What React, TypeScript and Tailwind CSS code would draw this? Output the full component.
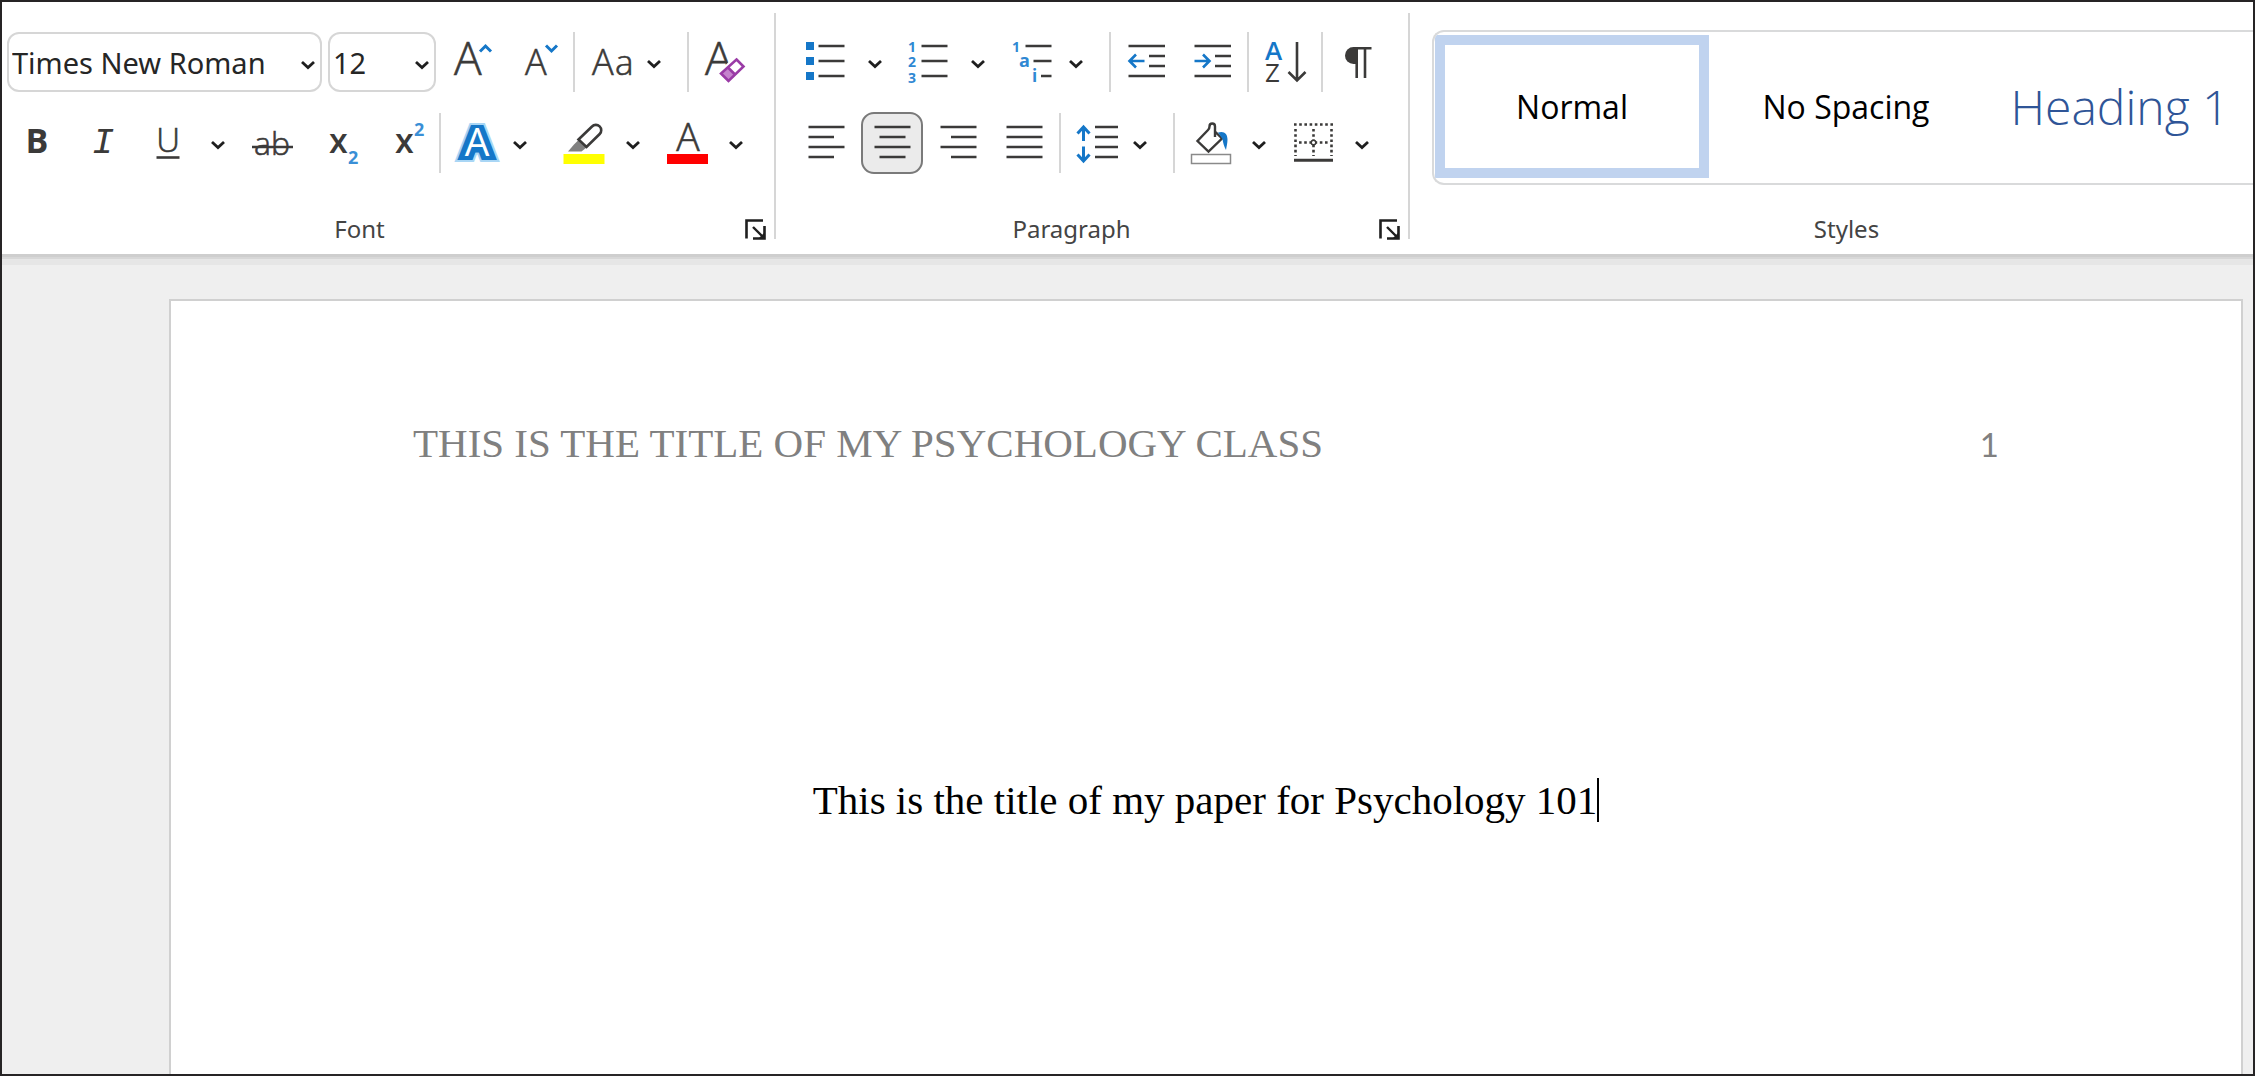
import type { ReactNode } from "react";

const INK = "#3b3a39";
const BLUE = "#1577c8";

function Chevron({ className = "" }: { className?: string }) {
  return (
    <svg width="14" height="14" viewBox="0 0 14 14" fill="none" className={className} aria-hidden="true">
      <path d="M1 6l6 5.500L13 6" stroke="#1f1f1f" strokeWidth="2.8" />
    </svg>
  );
}

function Icon({ width = 60, children }: { width?: number; children: ReactNode }) {
  return (
    <svg
      width={width}
      height="60"
      viewBox={`0 0 ${width} 60`}
      fill="none"
      stroke={INK}
      strokeWidth="2.6"
      aria-hidden="true"
      className="block shrink-0 overflow-visible"
    >
      {children}
    </svg>
  );
}

function Glyph({
  x,
  y,
  size,
  weight = 300,
  fill = INK,
  middle = false,
  children,
}: {
  x: number;
  y: number;
  size: number;
  weight?: number;
  fill?: string;
  middle?: boolean;
  children: string;
}) {
  return (
    <text
      x={x}
      y={y}
      fontSize={size}
      fontWeight={weight}
      fill={fill}
      stroke={weight === 300 ? fill : "none"}
      strokeWidth="0.6"
      textAnchor={middle ? "middle" : "start"}
      fontFamily='"Open Sans", "Noto Sans", sans-serif'
    >
      {children}
    </text>
  );
}

function Tool({ label, active = false, children }: { label: string; active?: boolean; children: ReactNode }) {
  return (
    <button
      type="button"
      aria-label={label}
      aria-pressed={active}
      className={
        active
          ? "flex size-15 shrink-0 items-center justify-center rounded-xl bg-[#ebebeb] outline-2 -outline-offset-1 outline-[#7a7a7a]"
          : "flex size-15 shrink-0 items-center justify-center rounded-xl hover:bg-gray-100"
      }
    >
      {children}
    </button>
  );
}

function SplitTool({ label, children }: { label: string; children: ReactNode }) {
  return (
    <div className="flex w-[97px] shrink-0">
      <Tool label={label}>{children}</Tool>
      <button type="button" aria-label={`${label} options`} className="flex flex-1 items-center justify-center">
        <Chevron />
      </button>
    </div>
  );
}

function MenuTool({ label, children }: { label: string; children: ReactNode }) {
  return (
    <button type="button" aria-label={label} className="flex h-15 w-[102px] shrink-0 items-center gap-[15px] pl-2.5">
      {children}
      <Chevron />
    </button>
  );
}

function Separator() {
  return <div className="-mx-px h-15 w-0.5 shrink-0 bg-[#d6d6d6]" />;
}

function Row({ children }: { children: ReactNode }) {
  return <div className="flex h-15 items-center gap-1.5">{children}</div>;
}

function Launcher({ label }: { label: string }) {
  return (
    <button type="button" aria-label={label} className="shrink-0">
      <svg width="21" height="21" viewBox="0 0 21 21" fill="none" stroke="#1f1f1f" strokeWidth="2.6" aria-hidden="true">
        <path d="M1.500 19.500V1.500H18" />
        <path d="M8 8l11 11" strokeWidth="2.4" />
        <path d="M19.500 7V19.500H8" />
        <path d="M20 13v7h-7z" fill="#1f1f1f" stroke="none" />
      </svg>
    </button>
  );
}

function RibbonGroup({
  title,
  rowsClass,
  labelClass,
  children,
}: {
  title: string;
  rowsClass: string;
  labelClass: string;
  children: ReactNode;
}) {
  return (
    <section aria-label={title} className="flex shrink-0 flex-col">
      <div className={rowsClass}>{children}</div>
      <div className="mt-10 flex items-center pr-2">
        <span className={labelClass}>{title}</span>
        <Launcher label={`${title} settings`} />
      </div>
    </section>
  );
}

function GroupDivider() {
  return <div className="mb-1.5 w-0.5 shrink-0 bg-[#d6d6d6]" />;
}

function Picker({ label, value, options, className }: { label: string; value: string; options: string[]; className: string }) {
  return (
    <label className={className}>
      <select
        aria-label={label}
        defaultValue={value}
        className="h-full w-full appearance-none rounded-xl border-2 border-[#d6d6d6] bg-white pt-0.5 pl-[3px] text-[29px] text-[#262626]"
      >
        {options.map((o) => (
          <option key={o}>{o}</option>
        ))}
      </select>
      <Chevron className="pointer-events-none absolute top-6 right-[7px]" />
    </label>
  );
}

function FontGroup() {
  return (
    <RibbonGroup
      title="Font"
      rowsClass="flex flex-col gap-[21px] pt-[19px] pr-5 pl-[5px]"
      labelClass="flex-1 pr-7 text-center text-2xl leading-8"
    >
      <Row>
        <Picker
          label="Font name"
          value="Times New Roman"
          options={["Times New Roman", "Arial", "Calibri"]}
          className="relative h-15 w-[315px] shrink-0"
        />
        <Picker label="Font size" value="12" options={["11", "12", "14"]} className="relative h-15 w-[108px] shrink-0" />
        <Tool label="Increase font size">
          <Icon>
            <Glyph x={12} y={43} size={46}>A</Glyph>
            <path d="M38 19.500l5.500-5.500 5.500 5.500" stroke={BLUE} strokeWidth="3" />
          </Icon>
        </Tool>
        <Tool label="Decrease font size">
          <Icon>
            <Glyph x={17} y={43} size={36}>A</Glyph>
            <path d="M38 13.500l5.500 5.500 5.500-5.500" stroke={BLUE} strokeWidth="3" />
          </Icon>
        </Tool>
        <Separator />
        <MenuTool label="Change case">
          <Icon width={42}>
            <Glyph x={2} y={43} size={36}>A</Glyph>
            <Glyph x={25} y={43} size={35}>a</Glyph>
          </Icon>
        </MenuTool>
        <Separator />
        <Tool label="Clear formatting">
          <Icon>
            <Glyph x={11} y={43} size={46}>A</Glyph>
            <path d="M42 23L54 34 34 54 21 43z" fill="#fff" stroke="none" />
            <path d="M33.500 35l7.500 7.500-7 7-7.500-7.500z" fill="#c583cd" stroke="none" />
            <path d="M42.500 27.500l7 7-15 14.500-7.500-7.500z" stroke="#9a3ba6" />
            <path d="M33.500 35l7.500 7.500" stroke="#9a3ba6" />
          </Icon>
        </Tool>
      </Row>
      <Row>
        <Tool label="Bold">
          <Icon>
            <Glyph x={30} y={40} size={34} weight={700} middle>B</Glyph>
          </Icon>
        </Tool>
        <Tool label="Italic">
          <Icon>
            <text x="30" y="40" fontSize="37" fontStyle="italic" textAnchor="middle" fill={INK} stroke="none" fontFamily='"Liberation Mono", monospace'>
              I
            </text>
          </Icon>
        </Tool>
        <SplitTool label="Underline">
          <Icon>
            <Glyph x={29} y={39} size={33} middle>U</Glyph>
            <path d="M17.500 44.500h23" />
          </Icon>
        </SplitTool>
        <Tool label="Strikethrough">
          <Icon>
            <Glyph x={30} y={42} size={32} middle>ab</Glyph>
            <path d="M10 34h41" />
          </Icon>
        </Tool>
        <Tool label="Subscript">
          <Icon>
            <Glyph x={21} y={40} size={34} weight={600}>x</Glyph>
            <Glyph x={40} y={51} size={18} weight={700} fill="#3a8fd6">2</Glyph>
          </Icon>
        </Tool>
        <Tool label="Superscript">
          <Icon>
            <Glyph x={21} y={40} size={34} weight={600}>x</Glyph>
            <Glyph x={40} y={23} size={18} weight={700} fill="#3a8fd6">2</Glyph>
          </Icon>
        </Tool>
        <Separator />
        <MenuTool label="Text effects">
          <Icon width={42}>
            <clipPath id="effects-halo">
              <path d="M-4 10h50v39H-4z" />
            </clipPath>
            <clipPath id="effects-body">
              <path d="M-4 12h50v35H-4z" />
            </clipPath>
            <g fontFamily='"Open Sans", sans-serif' fontSize="39" fontWeight="500" textAnchor="middle">
              <text x="21" y="43" stroke="#a9d6f5" strokeWidth="15" clipPath="url(#effects-halo)">A</text>
              <text x="21" y="43" stroke={BLUE} strokeWidth="11" fill={BLUE} clipPath="url(#effects-body)">A</text>
              <text x="21" y="43" stroke="none" fill="#fff">A</text>
            </g>
          </Icon>
        </MenuTool>
        <SplitTool label="Text highlight color">
          <Icon>
            <path d="M14 38.500l6-7 4.500-4.500 8 7.500-5 4z" fill="#808080" stroke="none" />
            <path d="M24.500 26.500L38 13.500a5.300 5.300 0 0 1 7.700 7.500L32.500 34z" />
            <path d="M9.500 41h41v10h-41z" fill="#ffff00" stroke="none" />
          </Icon>
        </SplitTool>
        <SplitTool label="Font color">
          <Icon>
            <Glyph x={31} y={38} size={39} middle>A</Glyph>
            <path d="M10 41h41v10H10z" fill="#ff0000" stroke="none" />
          </Icon>
        </SplitTool>
      </Row>
    </RibbonGroup>
  );
}

function ParagraphGroup() {
  return (
    <RibbonGroup
      title="Paragraph"
      rowsClass="flex flex-col gap-[21px] px-5 pt-[19px]"
      labelClass="flex-1 pr-3 text-center text-2xl leading-8"
    >
      <Row>
        <SplitTool label="Bullets">
          <Icon>
            <path d="M10 10h8v8h-8zM10 25h8v8h-8zM10 40h8v8h-8z" fill={BLUE} stroke="none" />
            <path d="M22.500 14h26M22.500 29h26M22.500 44h26" />
          </Icon>
        </SplitTool>
        <SplitTool label="Numbering">
          <Icon>
            <Glyph x={9} y={20} size={14} weight={700} fill="#2f88d3">1</Glyph>
            <Glyph x={9} y={35} size={14} weight={700} fill="#2f88d3">2</Glyph>
            <Glyph x={9} y={51} size={14} weight={700} fill="#2f88d3">3</Glyph>
            <path d="M22.500 14h26M22.500 29h26M22.500 44h26" />
          </Icon>
        </SplitTool>
        <MenuTool label="Multilevel list">
          <Icon width={42}>
            <Glyph x={0} y={20} size={14} weight={700} fill="#2f88d3">1</Glyph>
            <Glyph x={7} y={35} size={18} weight={700} fill="#2f88d3">a</Glyph>
            <Glyph x={20} y={50} size={17} weight={700} fill="#2f88d3">i</Glyph>
            <path d="M13.500 14h26M21.500 29h18M29 44h10.500" />
          </Icon>
        </MenuTool>
        <Separator />
        <Tool label="Decrease indent">
          <Icon>
            <path d="M12.500 14h36.500M33 24h16M33 34h16M12.500 44h36.500" />
            <path d="M28.500 29h-14M20 22.500L13.500 29l6.500 6.500" stroke={BLUE} />
          </Icon>
        </Tool>
        <Tool label="Increase indent">
          <Icon>
            <path d="M12.500 14h36.500M33 24h16M33 34h16M12.500 44h36.500" />
            <path d="M12.500 29h14M21 22.500l6.500 6.500-6.500 6.500" stroke={BLUE} />
          </Icon>
        </Tool>
        <Separator />
        <button type="button" aria-label="Sort" className="flex h-15 w-[62px] shrink-0 items-center justify-center">
          <Icon width={62}>
            <Glyph x={11} y={28} size={26} weight={600} fill={BLUE}>A</Glyph>
            <Glyph x={11} y={50} size={26} weight={500}>Z</Glyph>
            <path d="M43 10v38M34.500 40l8.500 8.500 8.500-8.500" />
          </Icon>
        </button>
        <Separator />
        <Tool label="Show formatting marks">
          <Icon>
            <path d="M29 15h-3.500a8.500 8.500 0 0 0 0 17H29z" fill={INK} stroke="none" />
            <path d="M26 16.300h17.500M28.700 15v31M37 15v31" />
          </Icon>
        </Tool>
      </Row>
      <Row>
        <Tool label="Align left">
          <Icon>
            <path d="M12.500 14h36M12.500 24h25.500M12.500 34h36M12.500 44h25.500" />
          </Icon>
        </Tool>
        <Tool label="Center" active>
          <Icon>
            <path d="M12.500 14h36M17.500 24h26M12.500 34h36M17.500 44h26" />
          </Icon>
        </Tool>
        <Tool label="Align right">
          <Icon>
            <path d="M12.500 14h36M23 24h25.500M12.500 34h36M23 44h25.500" />
          </Icon>
        </Tool>
        <Tool label="Justify">
          <Icon>
            <path d="M12.500 14h36M12.500 24h36M12.500 34h36M12.500 44h36" />
          </Icon>
        </Tool>
        <Separator />
        <MenuTool label="Line spacing">
          <Icon width={42}>
            <path d="M7.500 28V14.500M1.500 20.500l6-6.500 6 6.500M7.500 33.500V47M1.500 41.500l6 6.500 6-6.500" stroke={BLUE} strokeWidth="3" />
            <path d="M19 14h23M19 24h23M19 34h23M19 44h23" />
          </Icon>
        </MenuTool>
        <Separator />
        <SplitTool label="Shading">
          <Icon>
            <path d="M35 24V13.500c0-4-5.500-4-5.500 0 0 1.500-.5 2.500-1.500 3.500L17.500 28l11 10.500L42 25.500l-7-7" strokeWidth="2.400" />
            <path d="M38 19.500c6-2 9.500 1 9.500 7 0 4-1 7-1.500 10.500-2-4-3-7-3.500-11z" fill={BLUE} stroke="none" />
            <path d="M11.500 41.500h39v9h-39z" fill="#fff" stroke="#8a8a8a" strokeWidth="1.500" />
          </Icon>
        </SplitTool>
        <SplitTool label="Borders">
          <Icon>
            <path d="M11 11.500h39M16 29.500h30M12.500 16v27M30.500 16v27M48.500 16v27" strokeDasharray="2.600 2.600" />
            <circle cx="30.500" cy="29.500" r="2.300" fill="#fff" strokeWidth="1.500" />
            <path d="M11 47.300h39" strokeWidth="3" />
          </Icon>
        </SplitTool>
      </Row>
    </RibbonGroup>
  );
}

function StylesGroup() {
  return (
    <section aria-label="Styles" className="flex min-w-0 flex-1 flex-col pt-[17px] pl-[22px]">
      <div className="flex h-[155px] overflow-hidden rounded-l-xl border-2 border-r-0 border-[#d9dadb] pt-[3px] pb-[5px] pl-px font-['Open_Sans',sans-serif] text-[32px] font-medium text-black">
        <button type="button" aria-pressed="true" className="w-[274px] shrink-0 border-10 border-[#c0d3ef]">
          Normal
        </button>
        <button type="button" className="w-[274px] shrink-0">
          No Spacing
        </button>
        <button type="button" className="w-[274px] shrink-0 text-5xl font-light whitespace-nowrap text-[#2f5597]">
          Heading 1
        </button>
      </div>
      <span className="mt-7 pl-2 text-center text-2xl leading-8">Styles</span>
    </section>
  );
}

export default function App() {
  return (
    <div className="flex min-h-screen flex-col overflow-hidden border-2 border-[#262425] bg-[#efefef] font-['Noto_Sans',sans-serif] text-[#444444]">
      <header className="relative flex border-b-[3px] border-[#cecece] bg-white pt-[11px] pb-[9px] shadow-[0_2px_0_#d7d7d7,0_8px_0_#e6e6e6]">
        <FontGroup />
        <GroupDivider />
        <ParagraphGroup />
        <GroupDivider />
        <StylesGroup />
      </header>
      <main className="mt-[42px] mr-2.5 ml-[167px] flex flex-1 flex-col border-2 border-b-0 border-[#d0d0d0] bg-white px-[242px] pt-[118px] font-['Liberation_Serif',serif] text-[41px] leading-12">
        <div className="flex items-baseline justify-between text-[#808080]">
          <span>THIS IS THE TITLE OF MY PSYCHOLOGY CLASS</span>
          <span className="font-['Lato',sans-serif] text-[33px]">1</span>
        </div>
        <div className="mt-[308px] flex items-center justify-center text-black">
          <h1>This is the title of my paper for Psychology 101</h1>
          <div className="h-11 w-0.5 bg-black" />
        </div>
      </main>
    </div>
  );
}
